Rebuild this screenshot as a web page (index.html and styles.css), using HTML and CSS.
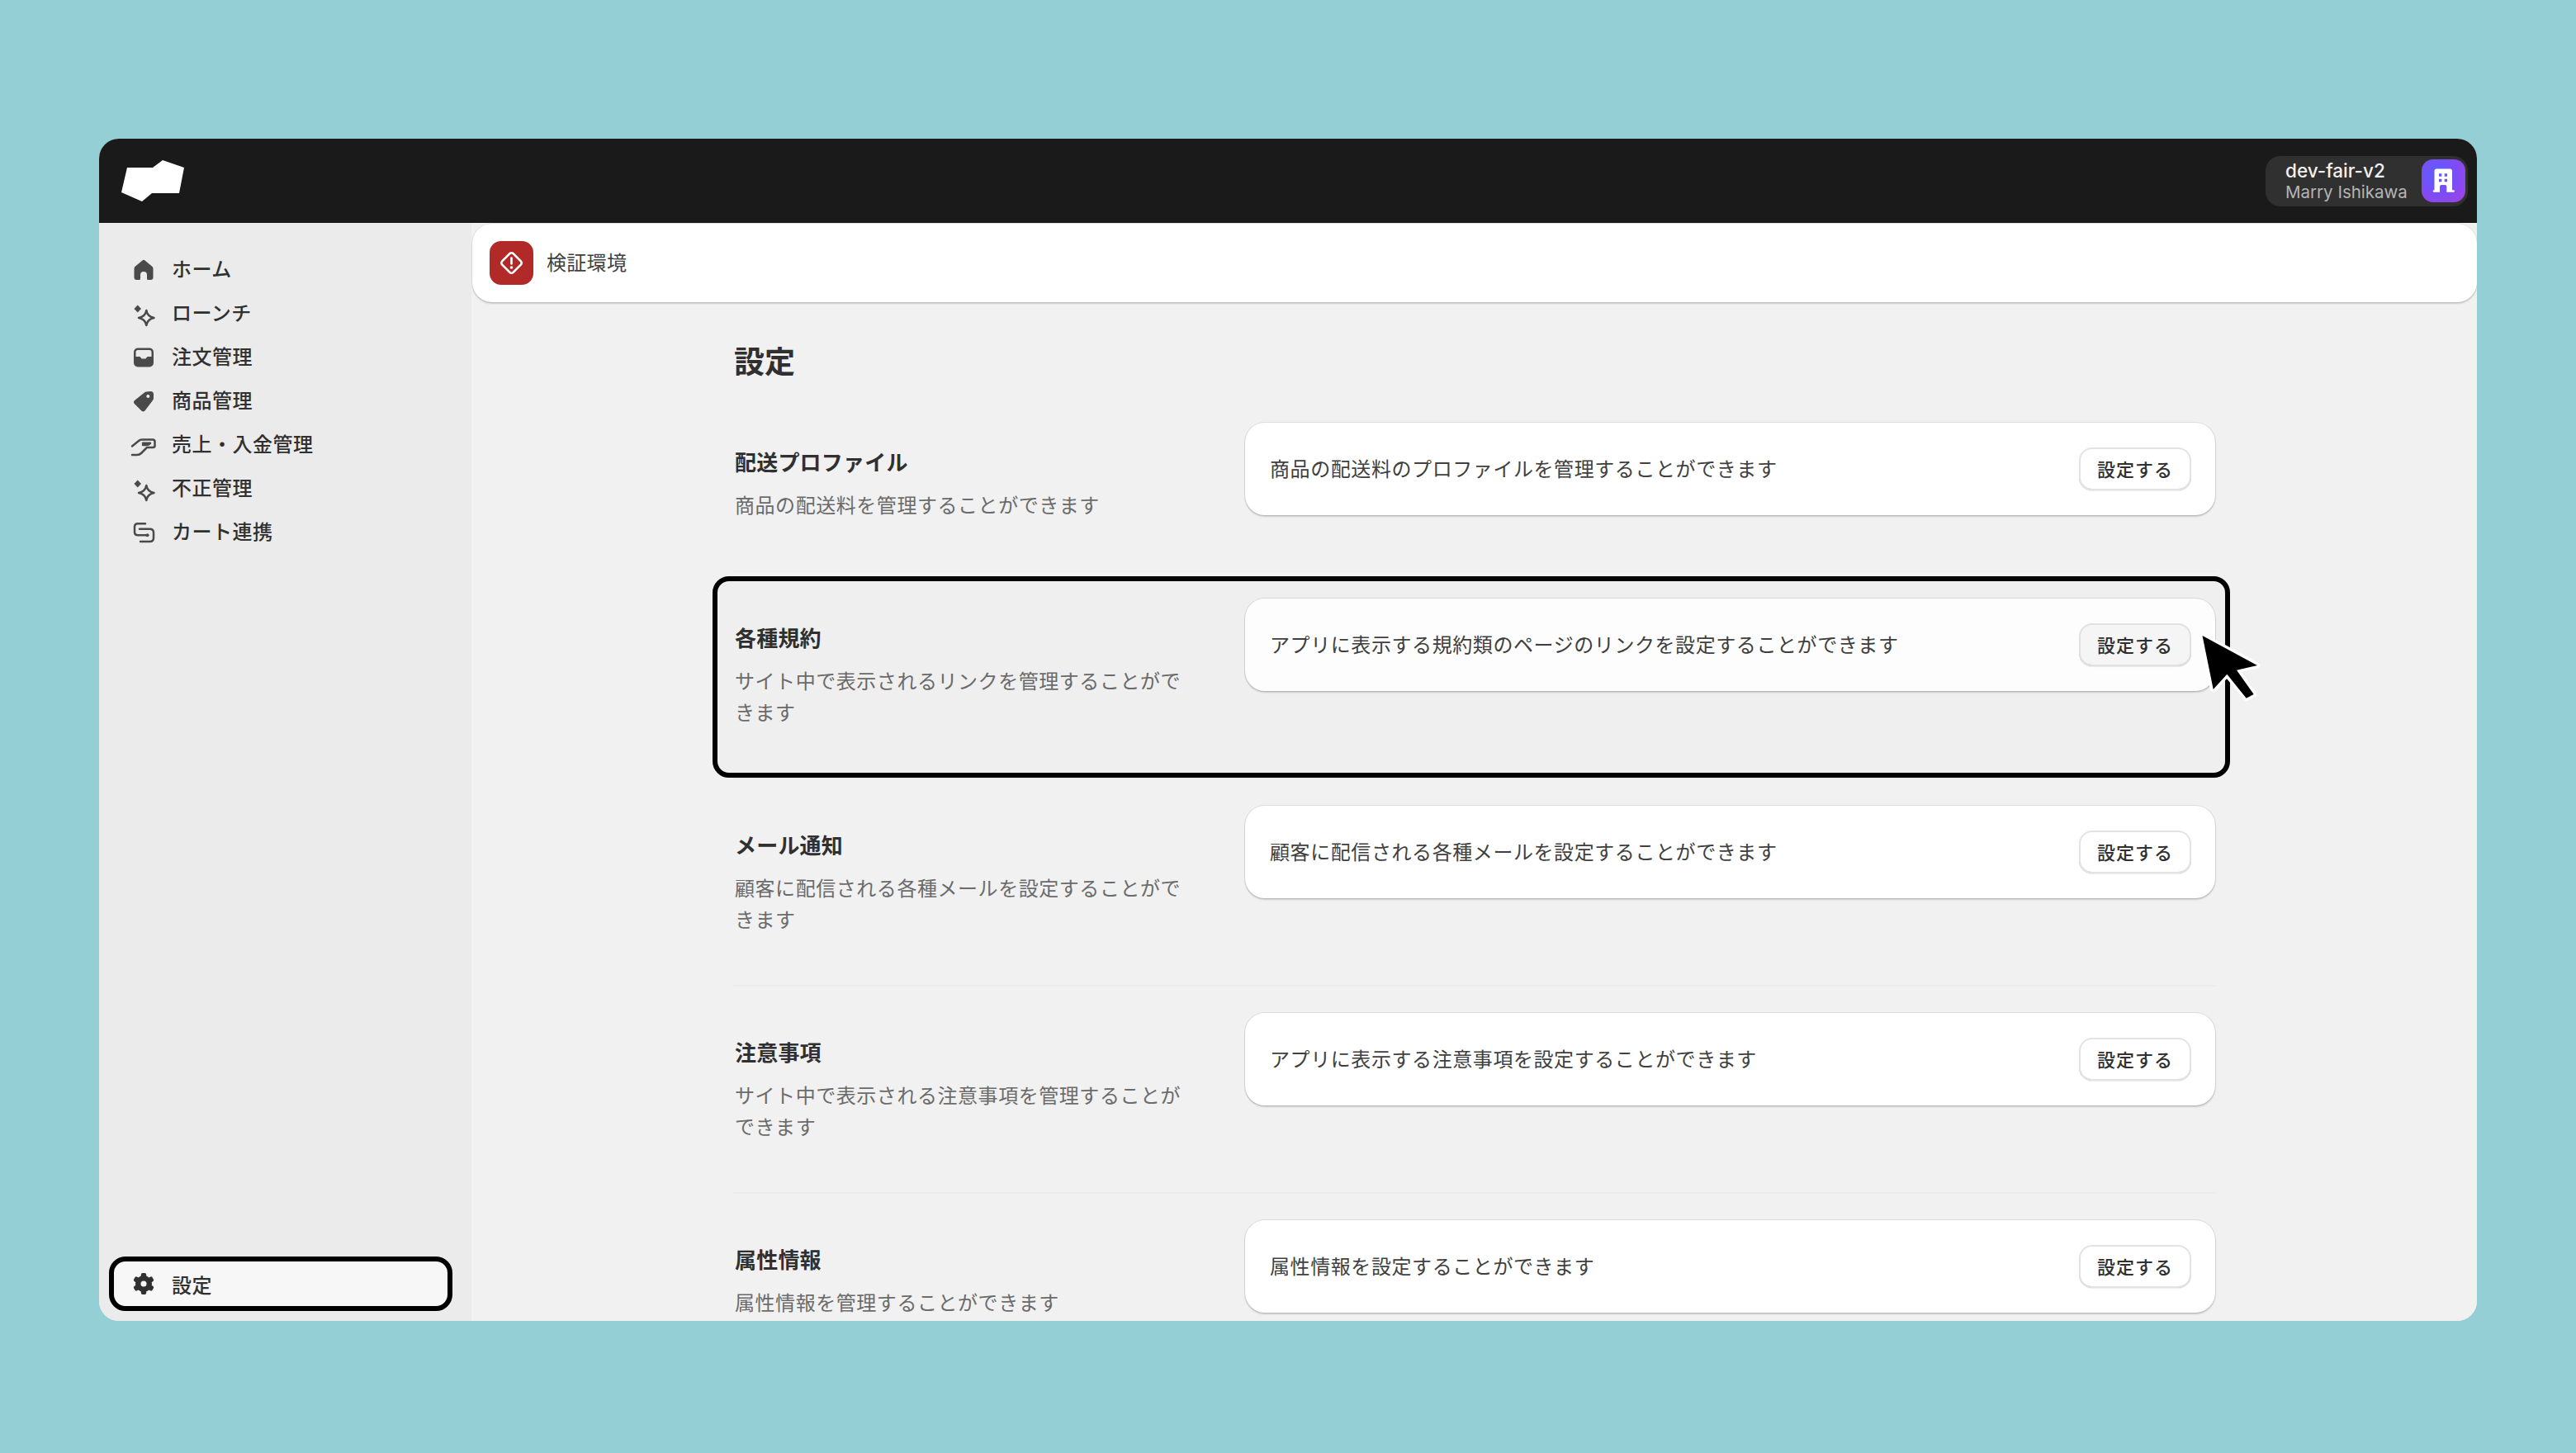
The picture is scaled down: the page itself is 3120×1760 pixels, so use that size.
FILE: index.html
```html
<!DOCTYPE html>
<html lang="ja">
<head>
<meta charset="utf-8">
<title>設定</title>
<link rel="stylesheet" href="styles.css">
</head>
<body>
<div class="window">
  <header class="topbar">
    <svg class="logo" viewBox="0 0 76 50"><path d="M7 9H38L50 0L76 9L70 40H37L25 50L0 39Z"/></svg>
    <div class="account">
      <div class="account-text">
        <div class="shop">dev-fair-v2</div>
        <div class="user">Marry Ishikawa</div>
      </div>
      <div class="avatar">
        <svg viewBox="0 0 53 52"><path class="bld" fill-rule="evenodd" d="M18 11.5H34.5a2.5 2.5 0 0 1 2.5 2.5V37.3h1.7a1.2 1.2 0 0 1 0 2.4H30.3V33a2 2 0 0 0-2-2H24a2 2 0 0 0-2 2V39.7H14.9a1.2 1.2 0 0 1 0-2.4H15.5V14a2.5 2.5 0 0 1 2.5-2.5ZM21 17.3V20.7H24.3V17.3ZM27.7 17.3V20.7H31V17.3ZM21 23.7V27.3H24.3V23.7ZM27.7 23.7V27.3H31V23.7Z"/></svg>
      </div>
    </div>
  </header>

  <nav class="sidebar">
    <ul class="nav">
      <li class="nav-item"><svg class="ico" viewBox="0 0 32 32"><path class="fill" d="M14.5 4.5a2.3 2.3 0 0 1 3 0l8.5 7a4 4 0 0 1 1.5 3V25a3 3 0 0 1-3 3h-3a1.5 1.5 0 0 1-1.5-1.5V22a4 4 0 0 0-8 0v4.5a1.5 1.5 0 0 1-1.5 1.5h-3a3 3 0 0 1-3-3V14.500a4 4 0 0 1 1.500-3Z"/></svg>ホーム</li>
      <li class="nav-item"><svg class="ico" viewBox="0 0 32 32"><path class="fill" d="M8.700 5.500 13 10 8.700 14.500 4.500 10Z"/><path class="line" d="M19.300 12Q20.500 19.500 28.500 21 20.500 22.500 19.300 30 18 22.500 10 21 18 19.500 19.300 12Z"/></svg>ローンチ</li>
      <li class="nav-item"><svg class="ico" viewBox="0 0 32 32"><path class="fill" fill-rule="evenodd" d="M9 4.500h14a5 5 0 0 1 5 5v13a5 5 0 0 1-5 5H9a5 5 0 0 1-5-5v-13a5 5 0 0 1 5-5ZM9 7a2.500 2.500 0 0 0-2.500 2.500V15h5l2 2.500h5l2-2.500h5V9.500A2.500 2.500 0 0 0 23 7Z"/></svg>注文管理</li>
      <li class="nav-item"><svg class="ico" viewBox="0 0 32 32"><path class="fill" fill-rule="evenodd" d="M17 5.500a3.500 3.500 0 0 1 2.300-1L24.500 4A3.500 3.500 0 0 1 28 7.500v5a3.500 3.500 0 0 1-1 2.400L17.500 27.500a3 3 0 0 1-4.200 0L5 19.200a3 3 0 0 1 0-4.200ZM21.300 8a2 2 0 1 0 .01 0Z"/></svg>商品管理</li>
      <li class="nav-item"><svg class="ico" viewBox="0 0 32 32"><path class="line" d="M2 17.500 10 11Q11.500 9.500 14 9.500H27Q29.500 9.500 29.500 12V17Q29.500 19 27 19H20L13 26Q11 28 8 28H2"/><path class="line" d="M15 13.800H24Q22 16 19 16H15"/></svg>売上・入金管理</li>
      <li class="nav-item"><svg class="ico" viewBox="0 0 32 32"><path class="fill" d="M8.700 5.500 13 10 8.700 14.500 4.500 10Z"/><path class="line" d="M19.300 12Q20.500 19.500 28.500 21 20.500 22.500 19.300 30 18 22.500 10 21 18 19.500 19.300 12Z"/></svg>不正管理</li>
      <li class="nav-item"><svg class="ico" viewBox="0 0 32 32"><path class="line" d="M18 5.300H9Q5 5.300 5 9.300V15.300Q5 19.300 9 19.300H21"/><path class="line" d="M11 11.700H23.500Q28 11.700 28 16.200V22.500Q28 27 23.500 27H12"/><circle class="fill" cx="20.500" cy="19.300" r="2"/></svg>カート連携</li>
    </ul>
    <div class="nav-item nav-settings"><svg class="ico" viewBox="0 0 32 32"><circle class="gear" cx="16" cy="16" r="6.800"/><rect class="fill" x="12.800" y="3" width="6.400" height="6" rx="2"/><rect class="fill gt1" x="12.800" y="3" width="6.400" height="6" rx="2"/><rect class="fill gt2" x="12.800" y="3" width="6.400" height="6" rx="2"/><rect class="fill gt3" x="12.800" y="3" width="6.400" height="6" rx="2"/><rect class="fill gt4" x="12.800" y="3" width="6.400" height="6" rx="2"/><rect class="fill gt5" x="12.800" y="3" width="6.400" height="6" rx="2"/></svg>設定</div>
  </nav>

  <main class="main">
    <div class="banner">
      <div class="banner-icon">
        <svg viewBox="0 0 53 53"><rect class="warn" x="17" y="17" width="19" height="19" rx="3" transform="rotate(45 26.500 26.500)"/><path class="warn" d="M26.500 20.500V27.500"/><circle class="warn-dot" cx="26.500" cy="32" r="1.800"/></svg>
      </div>
      <span class="banner-text">検証環境</span>
    </div>
    <section class="content">
      <h1 class="page-title">設定</h1>

      <div class="row">
        <div class="row-info"><h2>配送プロファイル</h2><p>商品の配送料を管理することができます</p></div>
        <div class="card"><span class="card-text">商品の配送料のプロファイルを管理することができます</span><button class="btn">設定する</button></div>
      </div>

      <div class="row row-active">
        <div class="row-info"><h2>各種規約</h2><p>サイト中で表示されるリンクを管理することができます</p></div>
        <div class="card"><span class="card-text">アプリに表示する規約類のページのリンクを設定することができます</span><button class="btn">設定する</button></div>
        <div class="highlight"></div>
        <svg class="cursor" viewBox="0 0 80 92"><path d="M8.500 8 75 44 50 49.700 70.700 79 61.700 83.700 38.300 54.700 21.700 73Z"/></svg>
      </div>

      <div class="row">
        <div class="row-info"><h2>メール通知</h2><p>顧客に配信される各種メールを設定することができます</p></div>
        <div class="card"><span class="card-text">顧客に配信される各種メールを設定することができます</span><button class="btn">設定する</button></div>
      </div>

      <div class="row">
        <div class="row-info"><h2>注意事項</h2><p>サイト中で表示される注意事項を管理することができます</p></div>
        <div class="card"><span class="card-text">アプリに表示する注意事項を設定することができます</span><button class="btn">設定する</button></div>
      </div>

      <div class="row">
        <div class="row-info"><h2>属性情報</h2><p>属性情報を管理することができます</p></div>
        <div class="card"><span class="card-text">属性情報を設定することができます</span><button class="btn">設定する</button></div>
      </div>
    </section>
  </main>
</div>
</body>
</html>
```

FILE: styles.css
```css
* { box-sizing: border-box; }
html, body { height: 100%; }
body {
  margin: 0;
  padding: 168px 120px 160px;
  background: #94cfd5;
  font-family: "Inter", "Noto Sans CJK JP", sans-serif;
  overflow: hidden;
}
.window {
  height: 1432px;
  display: grid;
  grid-template-columns: 451px 1fr;
  grid-template-rows: 102px 1fr;
  border-radius: 24px;
  overflow: hidden;
  background: #ebebeb;
}
.topbar {
  grid-column: 1 / 3;
  display: flex;
  align-items: center;
  justify-content: space-between;
  padding: 0 11px 0 27px;
  background: #1a1a1a;
}
.logo { width: 76px; height: 50px; fill: #fff; }
.account {
  display: flex;
  align-items: center;
  gap: 17px;
  height: 61px;
  padding: 0 3px 0 24px;
  background: #303030;
  border-radius: 18px;
}
.account-text { width: 148px; line-height: 26px; padding-top: 2px; }
.shop { font-size: 22.5px; color: #f1f1f1; font-weight: 500; }
.user { font-size: 20.5px; color: #b5b5b5; white-space: nowrap; }
.avatar {
  width: 53px;
  height: 52px;
  border-radius: 14px;
  background: radial-gradient(circle at 35% 35%, #5a5eff 0, #7d4cf5 50%, #a541e6 100%);
}
.avatar svg { display: block; width: 53px; height: 52px; }
.bld { fill: #fff; }

.sidebar {
  display: flex;
  flex-direction: column;
  justify-content: space-between;
  padding: 28px 0 12px;
  background: #ebebeb;
  min-height: 0;
}
.nav { list-style: none; margin: 0; padding: 0; }
.nav-item {
  display: flex;
  align-items: center;
  gap: 18px;
  height: 53px;
  padding-left: 38px;
  font-family: "Noto Sans CJK JP", sans-serif;
  font-size: 24px;
  font-weight: 500;
  letter-spacing: .5px;
  color: #303030;
}
.ico { width: 32px; height: 32px; flex: none; margin-top: 4px; overflow: visible; }
.fill { fill: #4a4a4a; }
.line { fill: none; stroke: #4a4a4a; stroke-width: 2.5; stroke-linejoin: round; stroke-linecap: round; }
.nav-settings {
  width: 416px;
  height: 66px;
  margin-left: 12px;
  padding-left: 20px;
  background: #f7f7f7;
  border: 6px solid #000;
  border-radius: 20px;
}
.nav-settings .ico { margin-top: 0; }
.nav-settings .fill { fill: #303030; }
.gear { fill: none; stroke: #303030; stroke-width: 6.500; }
.gt1, .gt2, .gt3, .gt4, .gt5 { transform-origin: 16px 16px; }
.gt1 { transform: rotate(60deg); }
.gt2 { transform: rotate(120deg); }
.gt3 { transform: rotate(180deg); }
.gt4 { transform: rotate(240deg); }
.gt5 { transform: rotate(300deg); }

.main {
  background: #f1f1f1;
  overflow: hidden;
  min-height: 0;
  padding-top: 1px;
}
.banner {
  display: flex;
  align-items: center;
  gap: 16px;
  height: 95px;
  margin-left: 1px;
  padding-left: 21px;
  background: #fff;
  border-radius: 24px;
  box-shadow: 0 2px 2px rgba(0, 0, 0, .16), 0 0 0 1px rgba(0, 0, 0, .06);
  font-family: "Noto Sans CJK JP", sans-serif;
  font-size: 24px;
  letter-spacing: .3px;
  color: #404040;
}
.banner-text { padding-bottom: 5px; }
.banner-icon { width: 53px; height: 53px; border-radius: 14px; background: #b12a28; }
.banner-icon svg { display: block; width: 53px; height: 53px; }
.warn { fill: none; stroke: #fff; stroke-width: 2.600; stroke-linecap: round; }
.warn-dot { fill: #fff; }

.content {
  width: 1795px;
  margin: 46px auto 0;
  font-family: "Noto Sans CJK JP", sans-serif;
}
.page-title {
  margin: 0 0 20px;
  padding-left: 1px;
  font-size: 37px;
  line-height: 48px;
  font-weight: 700;
  color: #303030;
}
.row {
  position: relative;
  display: grid;
  grid-template-columns: 550px 1175px;
  column-gap: 70px;
  align-items: start;
  padding-top: 32px;
  border-bottom: 2px solid #ececec;
}
.row-info { padding: 30px 0 61px 2px; }
.row-info h2 {
  margin: 0 0 16px;
  font-size: 26px;
  line-height: 34px;
  font-weight: 700;
  letter-spacing: .2px;
  color: #303030;
}
.row-info p {
  margin: 0;
  font-size: 24px;
  line-height: 38px;
  letter-spacing: .55px;
  color: #6b6b6b;
}
.card {
  display: flex;
  align-items: center;
  justify-content: space-between;
  height: 112px;
  padding: 0 29px 0 30px;
  background: #fff;
  border-radius: 24px;
  box-shadow: 0 2px 2px rgba(0, 0, 0, .16), 0 0 0 1px rgba(0, 0, 0, .09);
  font-size: 24px;
  letter-spacing: .58px;
  color: #404040;
}
.card-text { padding-bottom: 4px; }
.btn {
  width: 136px;
  height: 52px;
  padding: 0 0 2px;
  background: #fff;
  border: 0;
  border-radius: 16px;
  box-shadow: inset 0 0 0 2px #e3e3e3, inset 0 -2px 0 #b5b5b5, 0 1px 1px rgba(0, 0, 0, .08);
  font: 500 22px "Noto Sans CJK JP", sans-serif;
  letter-spacing: 1px;
  color: #303030;
}
.row-active .btn { background: #f7f7f7; }
.highlight {
  position: absolute;
  top: 5px;
  left: -25px;
  right: -18px;
  height: 244px;
  border: 6px solid #000;
  border-radius: 20px;
  background: rgba(0, 0, 0, .006);
}
.cursor {
  position: absolute;
  left: 1771px;
  top: 69px;
  width: 80px;
  height: 92px;
  overflow: visible;
}
.cursor path {
  fill: #000;
  stroke: #fff;
  stroke-width: 7;
  stroke-linejoin: round;
  paint-order: stroke;
}
```
